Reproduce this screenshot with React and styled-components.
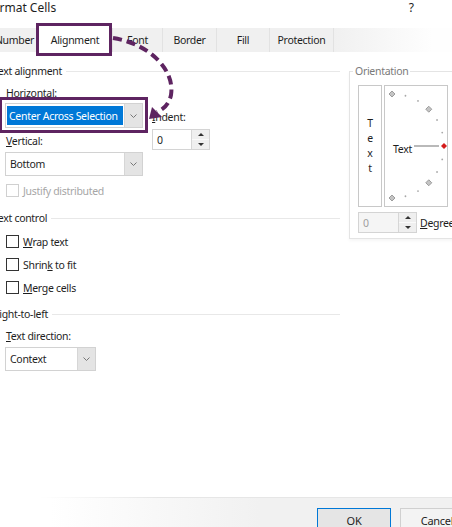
import React from 'react';
import styled, { createGlobalStyle } from 'styled-components';

const GlobalStyle = createGlobalStyle`
  body { margin: 0; background: #fff; }
`;

const PURPLE = '#5e2461';

const Window = styled.div`
  position: relative;
  width: 452px;
  height: 527px;
  overflow: hidden;
  background: #fff;
  display: flex;
  flex-direction: column;
  font-family: "Noto Sans", "Open Sans", sans-serif;
  font-size: 10.5px;
  letter-spacing: -0.3px;
  color: #1e1e1e;
  white-space: nowrap;
`;

const TitleBar = styled.div`
  display: flex;
  align-items: center;
  height: 14px;
  font-size: 12px;
  letter-spacing: 0;
`;

const Title = styled.span`
  margin-left: -14px;
`;

const Help = styled.span`
  margin-left: auto;
  margin-right: 38px;
`;

const TabStrip = styled.div`
  display: flex;
  height: 24px;
  margin-top: 14px;
  margin-left: -8px;
  background: linear-gradient(to right, #f0f0f0 0, #f0f0f0 340px, #fefefe 440px);
`;

const Tab = styled.div`
  position: relative;
  flex-shrink: 0;
  width: ${p => p.$w}px;
  display: flex;
  align-items: center;
  justify-content: center;
  box-sizing: border-box;
  border-right: 1px solid #e2e2e2;
  background: ${p => (p.$active ? '#fff' : 'transparent')};
`;

const Callout = styled.div`
  position: absolute;
  top: -5px;
  left: -2px;
  right: 0;
  bottom: -4px;
  border: 3px solid ${PURPLE};
  pointer-events: none;
`;

const Content = styled.div`
  display: flex;
  margin-top: 12px;
`;

const LeftCol = styled.div`
  flex-shrink: 0;
  width: 340px;
  display: flex;
  flex-direction: column;
`;

const SectionHeading = styled.div`
  display: flex;
  align-items: center;
  margin-left: -7px;
  margin-top: ${p => p.$mt || 0}px;
  line-height: 14px;
  &::after {
    content: '';
    flex: 1;
    height: 1px;
    margin-left: 4px;
    background: #e8e8e8;
  }
`;

const AlignRow = styled.div`
  display: flex;
  margin-top: 9px;
`;

const Stack = styled.div`
  display: flex;
  flex-direction: column;
  margin-top: ${p => p.$mt || 0}px;
  margin-left: ${p => p.$ml || 0}px;
`;

const FieldLabel = styled.div`
  line-height: 12px;
  margin-left: ${p => (p.$ml === undefined ? 6 : p.$ml)}px;
  margin-top: ${p => p.$mt || 0}px;
`;

const U = styled.span`
  text-decoration: underline;
  text-underline-offset: 1px;
`;

const Highlight = styled.div`
  margin-left: -1px;
  margin-top: -2px;
  padding: 3px 2px 2px 3px;
  border: 3px solid ${PURPLE};
  width: fit-content;
`;

const SelectBox = styled.div`
  display: flex;
  flex-shrink: 0;
  width: ${p => p.$w}px;
  height: ${p => p.$h || 24}px;
  margin-left: ${p => (p.$ml === undefined ? 5 : p.$ml)}px;
  margin-top: ${p => p.$mt || 0}px;
  box-sizing: border-box;
  border: 1px solid #d2d2d2;
  background: #fff;
`;

const SelectValue = styled.div`
  flex: 1;
  display: flex;
  align-items: center;
  margin: 2px 1px 2px 1px;
  padding-left: ${p => (p.$active ? 2 : 3)}px;
  background: ${p => (p.$active ? '#0078d7' : 'transparent')};
  color: ${p => (p.$active ? '#fff' : 'inherit')};
`;

const SelectArrow = styled.div`
  width: 17px;
  display: flex;
  align-items: center;
  justify-content: center;
  background: #e4e4e4;
  border-left: 1px solid #d6d6d6;
`;

const Spin = styled.div`
  display: flex;
  width: ${p => p.$w}px;
  height: 21px;
  margin-top: ${p => p.$mt || 0}px;
  box-sizing: border-box;
  border: 1px solid #d4d4d4;
  background: ${p => (p.$disabled ? '#f5f5f5' : '#fff')};
`;

const SpinValue = styled.div`
  flex: 1;
  display: flex;
  align-items: center;
  padding-left: 4px;
  color: ${p => (p.$disabled ? '#a0a0a0' : 'inherit')};
`;

const SpinButtons = styled.div`
  width: 17px;
  display: flex;
  flex-direction: column;
  border-left: 1px solid #d6d6d6;
`;

const SpinBtn = styled.div`
  flex: 1;
  display: flex;
  align-items: center;
  justify-content: center;
  background: #efefef;
  & + & {
    border-top: 1px solid #fafafa;
  }
  &::before {
    content: '';
    border-left: 3px solid transparent;
    border-right: 3px solid transparent;
    ${p => (p.$down ? 'border-top: 3px solid #333;' : 'border-bottom: 3px solid #333;')}
  }
`;

const CheckRow = styled.div`
  display: flex;
  align-items: center;
  height: 13px;
  margin-left: 6px;
  margin-top: ${p => p.$mt || 0}px;
  color: ${p => (p.$disabled ? '#a6a6a6' : 'inherit')};
`;

const Box = styled.div`
  width: 13px;
  height: 13px;
  box-sizing: border-box;
  border: 1px solid ${p => (p.$disabled ? '#d0d0d0' : '#333')};
  background: #fff;
  margin-right: 4px;
`;

const RightCol = styled.div`
  flex-shrink: 0;
  margin-left: 9px;
`;

const Group = styled.fieldset`
  margin: 0;
  width: 110px;
  padding: 7px 8px 5px 8px;
  border: 1px solid #e4e4e4;
  box-shadow: 0 2px 3px rgba(0, 0, 0, 0.04);
`;

const Legend = styled.legend`
  padding: 0 2px;
  margin-left: -5px;
  line-height: 14px;
  color: #7a7a7a;
`;

const DialRow = styled.div`
  display: flex;
  gap: 2px;
`;

const VerticalText = styled.div`
  width: 24px;
  height: 122px;
  box-sizing: border-box;
  border: 1px solid #c8c8c8;
  display: flex;
  flex-direction: column;
  align-items: center;
  justify-content: center;
  line-height: 15px;
`;

const DialBox = styled.div`
  width: 64px;
  height: 122px;
  box-sizing: border-box;
  border: 1px solid #c8c8c8;
`;

const SpinRow = styled.div`
  display: flex;
  align-items: center;
  margin-top: 5px;
  gap: 3px;
`;

const Footer = styled.div`
  margin-top: auto;
  height: 30px;
  box-sizing: border-box;
  padding-top: 10px;
  display: flex;
  justify-content: flex-end;
  gap: 9px;
  margin-right: -22px;
  border-top: 1px solid transparent;
  border-image: linear-gradient(to right, #fff 40px, #e6e6e6 160px) 1;
  background: linear-gradient(to right, #fff 50px, #f1f1f1 260px);
`;

const Button = styled.div`
  width: 74px;
  height: 24px;
  box-sizing: border-box;
  display: flex;
  align-items: center;
  justify-content: center;
  border: 1px solid ${p => (p.$primary ? '#0078d7' : '#d0d0d0')};
  background: ${p => (p.$primary ? '#e5e5e5' : '#f3f3f3')};
  font-size: 11px;
`;

const Overlay = styled.svg`
  position: absolute;
  left: 0;
  top: 0;
  pointer-events: none;
`;

const Chevron = () => (
  <svg width="7" height="4" viewBox="0 0 7 4">
    <polyline points="0.5,0.5 3.5,3.5 6.5,0.5" fill="none" stroke="#777" strokeWidth="1" />
  </svg>
);

function Select({ value, width, active, ml, mt, h }) {
  return (
    <SelectBox $w={width} $ml={ml} $mt={mt} $h={h}>
      <SelectValue $active={active}>{value}</SelectValue>
      <SelectArrow>
        <Chevron />
      </SelectArrow>
    </SelectBox>
  );
}

function Spinner({ value, width, disabled, mt }) {
  return (
    <Spin $w={width} $disabled={disabled} $mt={mt}>
      <SpinValue $disabled={disabled}>{value}</SpinValue>
      <SpinButtons>
        <SpinBtn />
        <SpinBtn $down />
      </SpinButtons>
    </Spin>
  );
}

function Dial() {
  const cx = 7;
  const cy = 60;
  const r = 52;
  const marks = [];
  for (let a = -90; a <= 90; a += 15) {
    const rad = (a * Math.PI) / 180;
    const x = cx + r * Math.cos(rad);
    const y = cy - r * Math.sin(rad);
    if (a === 0) {
      marks.push(<polygon key={a} points={`${x},${y - 3} ${x + 3},${y} ${x},${y + 3} ${x - 3},${y}`} fill="#d41c1c" />);
    } else if (Math.abs(a) % 45 === 0) {
      marks.push(
        <polygon
          key={a}
          points={`${x},${y - 3} ${x + 3},${y} ${x},${y + 3} ${x - 3},${y}`}
          fill="#c4c4c4"
          stroke="#8c8c8c"
          strokeWidth="0.8"
        />
      );
    } else {
      marks.push(<circle key={a} cx={x} cy={y} r="0.9" fill="#a8a8a8" />);
    }
  }
  return (
    <svg width="62" height="120" viewBox="0 0 62 120">
      {marks}
      <line x1="29" y1={cy} x2="54" y2={cy} stroke="#8a8a8a" strokeWidth="1.2" />
      <text x="8" y="67" fontFamily='"Noto Sans", sans-serif' fontSize="10.5" letterSpacing="-0.3" fill="#1e1e1e">
        Text
      </text>
    </svg>
  );
}

const tabs = [
  { label: 'Number', w: 46 },
  { label: 'Alignment', w: 75, active: true },
  { label: 'Font', w: 50 },
  { label: 'Border', w: 54 },
  { label: 'Fill', w: 53 },
  { label: 'Protection', w: 64 },
];

export default function App() {
  return (
    <Window>
      <GlobalStyle />
      <TitleBar>
        <Title>Format Cells</Title>
        <Help>?</Help>
      </TitleBar>

      <TabStrip>
        {tabs.map(t => (
          <Tab key={t.label} $w={t.w} $active={t.active}>
            {t.label}
            {t.active && <Callout />}
          </Tab>
        ))}
      </TabStrip>

      <Content>
        <LeftCol>
          <SectionHeading>Text alignment</SectionHeading>
          <AlignRow>
            <Stack>
              <FieldLabel>Horizontal:</FieldLabel>
              <Highlight>
                <Select value="Center Across Selection" width={138} h={25} active ml={0} />
              </Highlight>
              <FieldLabel $mt={2}>
                <U>V</U>ertical:
              </FieldLabel>
              <Select value="Bottom" width={138} mt={5} />
              <CheckRow $mt={8} $disabled>
                <Box $disabled />
                Justify distributed
              </CheckRow>
            </Stack>
            <Stack $mt={24} $ml={4}>
              <FieldLabel $ml={0}>
                <U>I</U>ndent:
              </FieldLabel>
              <Spinner value="0" width={58} mt={6} />
            </Stack>
          </AlignRow>

          <SectionHeading $mt={14}>Text control</SectionHeading>
          <CheckRow $mt={10}>
            <Box />
            <span>
              <U>W</U>rap text
            </span>
          </CheckRow>
          <CheckRow $mt={10}>
            <Box />
            <span>
              Shrin<U>k</U> to fit
            </span>
          </CheckRow>
          <CheckRow $mt={10}>
            <Box />
            <span>
              <U>M</U>erge cells
            </span>
          </CheckRow>

          <SectionHeading $mt={13}>Right-to-left</SectionHeading>
          <FieldLabel $mt={9}>
            <U>T</U>ext direction:
          </FieldLabel>
          <Select value="Context" width={91} mt={5} />
        </LeftCol>

        <RightCol>
          <Group>
            <Legend>Orientation</Legend>
            <DialRow>
              <VerticalText>
                <span>T</span>
                <span>e</span>
                <span>x</span>
                <span>t</span>
              </VerticalText>
              <DialBox>
                <Dial />
              </DialBox>
            </DialRow>
            <SpinRow>
              <Spinner value="0" width={59} disabled />
              <span>
                <U>D</U>egrees
              </span>
            </SpinRow>
          </Group>
        </RightCol>
      </Content>

      <Footer>
        <Button $primary>OK</Button>
        <Button>Cancel</Button>
      </Footer>

      <Overlay width="452" height="527" viewBox="0 0 452 527">
        <path
          d="M113 38 C150 44, 175 70, 171 95 C169 104, 164 109, 157 112"
          fill="none"
          stroke={PURPLE}
          strokeWidth="4"
          strokeDasharray="9 5"
        />
        <polygon points="149,119 152,107 162,117" fill={PURPLE} />
      </Overlay>
    </Window>
  );
}
